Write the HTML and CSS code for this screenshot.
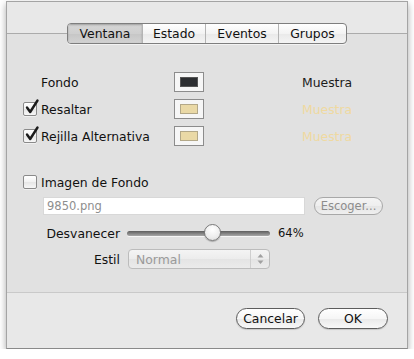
FILE: index.html
```html
<!DOCTYPE html>
<html lang="es">
<head>
    <meta charset="UTF-8">
    <meta name="viewport" content="width=device-width, initial-scale=1.0">
    <title>Preferencias - Ventana</title>
    <link rel="stylesheet" href="styles.css">
</head>
<body>
    <div class="window">
        <div class="toolbar">
            <div class="segmented">
                <div class="segment active seg-ventana">Ventana</div>
                <div class="segment seg-estado">Estado</div>
                <div class="segment seg-eventos">Eventos</div>
                <div class="segment seg-grupos">Grupos</div>
            </div>
        </div>

        <div class="content">
            <div class="colors">
                <span></span>
                <span class="label">Fondo</span>
                <div class="well"><div class="swatch dark"></div></div>
                <span class="sample dark-text">Muestra</span>

                <span class="checkbox checked">
                    <svg class="check" width="16" height="18" viewBox="0 0 16 18"><path d="M3 9.5 L6.2 14 L13.5 2.5" fill="none" stroke="#1b1b1b" stroke-width="2.4" stroke-linecap="round" stroke-linejoin="round"/></svg>
                </span>
                <span class="label">Resaltar</span>
                <div class="well"><div class="swatch tan"></div></div>
                <span class="sample tan-text">Muestra</span>

                <span class="checkbox checked">
                    <svg class="check" width="16" height="18" viewBox="0 0 16 18"><path d="M3 9.5 L6.2 14 L13.5 2.5" fill="none" stroke="#1b1b1b" stroke-width="2.4" stroke-linecap="round" stroke-linejoin="round"/></svg>
                </span>
                <span class="label">Rejilla Alternativa</span>
                <div class="well"><div class="swatch tan"></div></div>
                <span class="sample tan-text">Muestra</span>
            </div>

            <div class="bg-row">
                <span class="checkbox"></span>
                <span class="label">Imagen de Fondo</span>
            </div>

            <div class="file-row">
                <div class="field">9850.png</div>
                <button class="pill disabled small">Escoger...</button>
            </div>

            <div class="options">
                <span class="label right">Desvanecer</span>
                <div class="slider-line">
                    <div class="slider">
                        <div class="track"></div>
                        <div class="thumb"></div>
                    </div>
                    <span class="value">64%</span>
                </div>

                <span class="label right">Estil</span>
                <div class="popup">
                    <span class="popup-text">Normal</span>
                    <span class="popup-arrows">
                        <svg width="7" height="12" viewBox="0 0 7 12"><path d="M3.5 1 L6.5 4.5 L0.5 4.5 Z" fill="#a0a0a0"/><path d="M3.5 11 L6.5 7.5 L0.5 7.5 Z" fill="#a0a0a0"/></svg>
                    </span>
                </div>
            </div>
        </div>

        <div class="footer">
            <button class="pill cancel">Cancelar</button>
            <button class="pill ok">OK</button>
        </div>
    </div>
</body>
</html>
```

FILE: styles.css
```css
body {
    margin: 0;
    background: #ffffff;
    font-family: "DejaVu Sans", Verdana, sans-serif;
    font-size: 12px;
    color: #111;
}
.window {
    margin: 1px 0 0 6px;
    width: 400px;
    border: 1px solid #a4a4a4;
    border-bottom-color: #8a8a8a;
    box-shadow: 0 3px 7px rgba(0,0,0,0.35);
}
.toolbar {
    height: 32px;
    background: #e8e8e8;
    border-bottom: 1px solid #ababab;
    display: flex;
    justify-content: center;
    align-items: flex-start;
    padding-top: 21px;
    box-sizing: border-box;
}
.segmented {
    position: relative;
    z-index: 1;
    display: flex;
    height: 21px;
    box-sizing: border-box;
    border: 1px solid #7e7e7e;
    border-radius: 4px;
    background: linear-gradient(#ffffff, #f3f3f3 50%, #e9e9e9 51%, #f4f4f4);
    overflow: hidden;
    box-shadow: 0 1px 0 rgba(255,255,255,0.6);
}
.segment {
    height: 19px;
    line-height: 19px;
    text-align: center;
    font-size: 12.4px;
    border-left: 1px solid #b4b4b4;
    box-sizing: border-box;
    color: #111;
}
.segment:first-child {
    border-left: none;
}
.segment.active {
    background: linear-gradient(#d6d6d6, #cfcfcf 50%, #c6c6c6 51%, #d2d2d2);
    box-shadow: inset 0 1px 2px rgba(0,0,0,0.25);
}
.seg-ventana { width: 74px; }
.seg-estado { width: 63px; }
.seg-eventos { width: 73px; }
.seg-grupos { width: 68px; }

.content {
    height: 259px;
    background: #e1e1e1;
    border-bottom: 1px solid #c9c9c9;
    padding: 38px 0 0 16px;
    box-sizing: border-box;
}
.label {
    font-size: 12.4px;
    white-space: nowrap;
}
.label.right {
    text-align: right;
}
.colors {
    display: grid;
    grid-template-columns: 18px 133px 128px auto;
    grid-auto-rows: 20px;
    row-gap: 7px;
    align-items: center;
}
.checkbox {
    position: relative;
    display: inline-block;
    width: 14px;
    height: 14px;
    box-sizing: border-box;
    border: 1px solid #8a8a8a;
    border-radius: 2px;
    background: linear-gradient(#ffffff, #f2f2f2 50%, #e6e6e6 51%, #f7f7f7);
    box-shadow: 0 1px 0 rgba(255,255,255,0.5);
}
.check {
    position: absolute;
    left: 0;
    top: -5px;
}
.well {
    width: 30px;
    height: 20px;
    box-sizing: border-box;
    border: 1px solid #8c8c8c;
    background: #f6f6f6;
    padding: 4px 5px;
}
.swatch {
    height: 10px;
    border: 1px solid #9a9a9a;
    box-sizing: border-box;
}
.swatch.dark {
    background: #2c2e31;
    border-color: #555;
}
.swatch.tan {
    background: #ead9a6;
    border-color: #b3a888;
}
.sample {
    font-size: 12.4px;
}
.dark-text { color: #1c1c1c; }
.tan-text { color: #efd9a0; }

.bg-row {
    display: flex;
    align-items: center;
    height: 20px;
    margin-top: 26px;
}
.bg-row .checkbox {
    margin-right: 4px;
}
.file-row {
    display: flex;
    align-items: center;
    margin-top: 4px;
    margin-left: 20px;
    height: 19px;
}
.field {
    width: 262px;
    height: 18px;
    box-sizing: border-box;
    background: #ffffff;
    border: 1px solid #d8d8d8;
    color: #8e8e8e;
    font-size: 11.5px;
    line-height: 16px;
    padding-left: 3px;
}
.pill {
    font-family: "DejaVu Sans", Verdana, sans-serif;
    height: 21px;
    box-sizing: border-box;
    border: 1px solid #5c5c5c;
    border-radius: 11px;
    background: linear-gradient(#ffffff, #f6f6f6 50%, #e9e9e9 51%, #f8f8f8);
    font-size: 12.4px;
    color: #111;
    padding: 0;
    box-shadow: 0 1px 1px rgba(0,0,0,0.15);
}
.pill.small {
    height: 18px;
    font-size: 11.5px;
    width: 69px;
    margin-left: 9px;
}
.pill.disabled {
    border-color: #a8a8a8;
    color: #8c8c8c;
    box-shadow: none;
    background: linear-gradient(#f4f4f4, #eeeeee 50%, #e5e5e5 51%, #efefef);
}
.options {
    display: grid;
    grid-template-columns: 97px auto;
    grid-template-rows: 20px 20px;
    column-gap: 7px;
    row-gap: 6px;
    align-items: center;
    margin-top: 8px;
}
.slider-line {
    display: flex;
    align-items: center;
}
.slider {
    position: relative;
    width: 143px;
    height: 20px;
}
.track {
    position: absolute;
    left: 0;
    right: 0;
    top: 8px;
    height: 5px;
    border-radius: 3px;
    background: linear-gradient(#5e5e5e, #8a8a8a 60%, #a8a8a8);
    box-shadow: 0 1px 0 rgba(255,255,255,0.7);
}
.thumb {
    position: absolute;
    left: 77px;
    top: 1px;
    width: 17px;
    height: 17px;
    box-sizing: border-box;
    border-radius: 50%;
    border: 1px solid #7a7a7a;
    background: radial-gradient(circle at 50% 30%, #ffffff, #ededed 60%, #d6d6d6);
    box-shadow: 0 1px 1px rgba(0,0,0,0.25);
}
.value {
    margin-left: 8px;
    font-size: 11.5px;
}
.popup {
    margin-left: 1px;
    width: 142px;
    height: 20px;
    box-sizing: border-box;
    border: 1px solid #bcbcbc;
    border-radius: 4px;
    background: linear-gradient(#f4f4f4, #ececec 50%, #e4e4e4 51%, #ebebeb);
    display: flex;
    align-items: center;
}
.popup-text {
    flex: 1;
    padding-left: 7px;
    color: #9a9a9a;
    font-size: 12.4px;
}
.popup-arrows {
    width: 18px;
    height: 18px;
    border-left: 1px solid #cfcfcf;
    display: flex;
    align-items: center;
    justify-content: center;
}
.footer {
    height: 55px;
    background: #e8e8e8;
    display: flex;
    justify-content: flex-end;
    align-items: flex-start;
    gap: 13px;
    padding: 15px 19px 0 0;
    box-sizing: border-box;
}
.cancel { width: 69px; }
.ok { width: 70px; }
```
